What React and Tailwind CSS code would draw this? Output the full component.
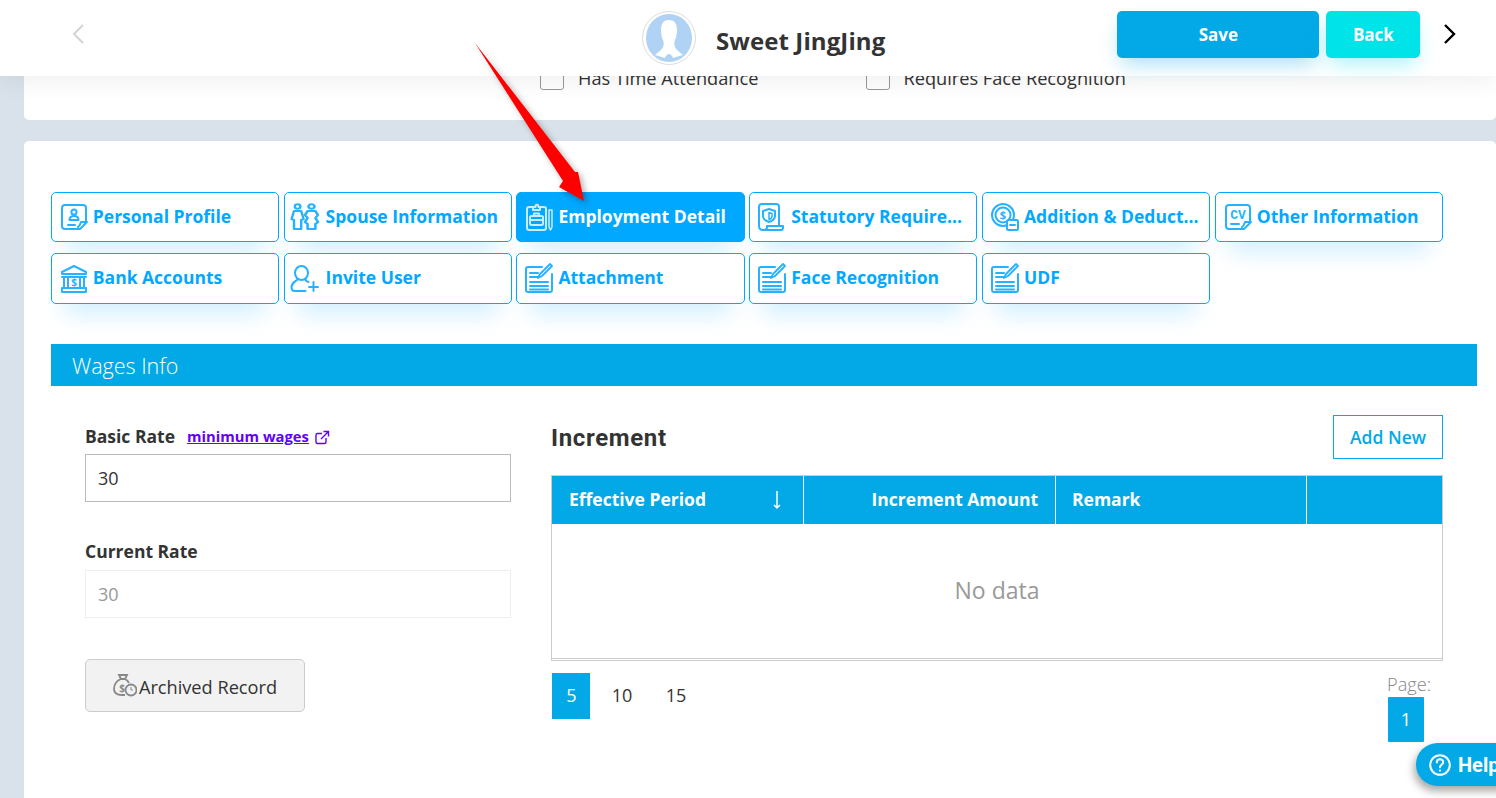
import React from "react";

const Doc = ({ children }) => (
  <svg className="overflow-visible" width="30" height="30" viewBox="0 0 30 30" fill="none" stroke="currentColor" strokeWidth="2" strokeLinecap="round" strokeLinejoin="round">{children}</svg>
);
const icons = {
  profile: (
    <Doc>
      <path d="M6 27c-2 0-3-1-3-3V6c0-2 1-3 3-3h18c2 0 3 1 3 3v14" />
      <path d="M6 27h15l7-7h-6c-1 2-1 4-3 5" />
      <circle cx="15" cy="10" r="2.600" />
      <path d="M10.500 18c0-3 2-4 4.500-4s4.500 1 4.500 4z" />
      <path d="M9 23h7" />
    </Doc>
  ),
  spouse: (
    <Doc>
      <g transform="translate(-4 0) scale(1.2 1)">
        <circle cx="8" cy="4.500" r="2.300" />
        <path d="M5 9h6l2 8-2 1v9H5v-9l-2-1z" />
      </g>
      <g transform="translate(-7.800 0) scale(1.3 1)">
        <circle cx="21" cy="4.500" r="2.300" />
        <path d="M18 9h6l2 4-2 3 2 4-2 2v5h-6v-5l-2-2 2-4-2-3z" />
      </g>
    </Doc>
  ),
  employment: (
    <Doc>
      <path d="M9 5H5C4 5 3 6 3 7v19c0 1 1 2 2 2h15c1 0 2-1 2-2V7c0-1-1-2-2-2h-4" />
      <path d="M9 8V5h2.500c0-3 3-3 3 0H16v3z" />
      <rect x="6" y="14" width="13" height="9" rx="1.500" />
      <path d="M10 14v-2.500h5V14M6 18h13" />
      <path d="M25 8v17l1.500 3 1.500-3V8z" strokeWidth="1.500" />
    </Doc>
  ),
  statutory: (
    <Doc>
      <g transform="translate(-2 0)">
        <path d="M8 28c-3 0-4-2-4-4V5c0-2 1-3 3-3h14c2 0 3 1 3 3v19" />
        <path d="M8 28h18c2 0 2-1 2-2.500V24H12v2c0 1-2 2-4 2z" />
        <path d="M14 7l6 2v5c0 3-3 5-6 6-3-1-6-3-6-6V9z" />
        <path d="M14 10.500l3 1v3c0 1.500-1.500 2.500-3 3z" strokeWidth="1.500" />
      </g>
    </Doc>
  ),
  addition: (
    <Doc>
      <circle cx="13" cy="13" r="11" />
      <circle cx="13" cy="13" r="7.500" />
      <text x="13" y="17" textAnchor="middle" fontSize="11" fontWeight="700" fill="currentColor" stroke="none" fontFamily="Open Sans, sans-serif">$</text>
      <rect x="17" y="18" width="11" height="10" rx="1.500" fill="white" />
      <path d="M20 23h5" />
    </Doc>
  ),
  cv: (
    <Doc>
      <path d="M6 27c-2 0-3-1-3-3V6c0-2 1-3 3-3h18c2 0 3 1 3 3v14" />
      <path d="M6 27h15l7-7h-6c-1 2-1 4-3 5" />
      <text x="15" y="16.500" textAnchor="middle" fontSize="13" fontWeight="700" fill="currentColor" stroke="none" fontFamily="Liberation Mono, monospace">CV</text>
      <path d="M8 22h8" />
    </Doc>
  ),
  bank: (
    <Doc>
      <path d="M15 2L3 8v2h24V8z" />
      <path d="M3 13h24M5 13v11M9 13v11M21 13v11M25 13v11" />
      <path d="M3 24h24v4H3z" />
      <text x="15" y="22" textAnchor="middle" fontSize="10" fontWeight="700" fill="currentColor" stroke="none" fontFamily="Open Sans, sans-serif">$</text>
    </Doc>
  ),
  invite: (
    <Doc>
      <g transform="translate(-2.500 0)">
        <ellipse cx="12" cy="9" rx="6.500" ry="7" />
        <path d="M8 15c0 2-6 3-6 8 0 3 1 4 3 4h11" />
        <path d="M16 15c0 1.500 1 2.500 3 3" />
        <path d="M24 18v9M19.500 23h9" />
      </g>
    </Doc>
  ),
  note: (
    <Doc>
      <path d="M18 3H4C3 3 2 4 2 5v21c0 1 1 2 2 2h22c1 0 2-1 2-2V10" />
      <path d="M6 13h9M6 18h18M6 22h18M6 25.500h18M6 9h8" strokeWidth="2" />
      <path d="M28 2l-10 10-4 2 2-4 10-10z" strokeWidth="1.800" />
    </Doc>
  ),
};

const tabs = [
  ["profile", "Personal Profile"],
  ["spouse", "Spouse Information"],
  ["employment", "Employment Detail", true],
  ["statutory", "Statutory Require..."],
  ["addition", "Addition & Deduct..."],
  ["cv", "Other Information"],
  ["bank", "Bank Accounts"],
  ["invite", "Invite User"],
  ["note", "Attachment"],
  ["note", "Face Recognition"],
  ["note", "UDF"],
];

function Tab({ icon, label, active }) {
  return (
    <div
      className={
        "flex h-full items-center gap-1 rounded-[5px] border border-[#00a8ff] pl-[7px] pr-1 text-[17.5px] leading-none font-bold whitespace-nowrap shadow-[0_22px_24px_-14px_rgba(0,168,255,0.22)] " +
        (active ? "bg-[#00a8ff] text-white" : "bg-white text-[#00a8ff]")
      }
    >
      <span className={"flex h-[30px] w-[30px] shrink-0 items-center justify-center " + (active ? "text-[#c9edff]" : "text-[#26b2ff]")}>
        {icons[icon]}
      </span>
      <span className="pb-[1px]">{label}</span>
    </div>
  );
}

export default function App() {
  return (
    <div className="relative h-[798px] w-[1496px] overflow-hidden bg-[#d9e2ea] font-['Open_Sans',sans-serif] text-[#333]">
      {/* sticky header */}
      <header className="absolute inset-x-0 top-0 z-10 flex h-[76px] items-start bg-white shadow-[0_4px_24px_rgba(0,0,0,0.07)]">
        <svg className="ml-[71px] mt-[23px]" width="14" height="22" viewBox="0 0 14 22" fill="none" stroke="#d4d4d4" strokeWidth="2">
          <path d="M12 2L3 11l9 9" />
        </svg>
        <div className="ml-[557px] mt-[11px] flex h-[54px] w-[54px] items-center justify-center rounded-full border border-[#ddd] bg-white">
          <svg width="48" height="50" viewBox="0 0 48 50">
            <ellipse cx="24" cy="25" rx="23" ry="24" fill="#b0d2f4" />
            <path d="M16 17c0-7 3-10 8-10s8 3 8 10c0 4-1 8-2 10-1 3-1 5 0 7 1 3 5 5 8 8l-10 3c-1-3-3-4-4-4s-3 1-4 4l-10-3c3-3 7-5 8-8 1-2 1-4 0-7-1-2-2-6-2-10z" fill="#fff" />
          </svg>
        </div>
        <div className="ml-5 mt-[23px] text-[24px] leading-[36px] font-bold tracking-[0.1px] text-[#333]">Sweet JingJing</div>
        <div className="ml-[232px] mt-[11px] flex h-[47px] w-[202px] items-center justify-center rounded-[5px] bg-[#02a9e6] text-[17px] font-bold text-white shadow-[0_10px_20px_-4px_rgba(2,169,230,0.35)]">Save</div>
        <div className="ml-[7px] mt-[11px] flex h-[47px] w-[94px] items-center justify-center rounded-[5px] bg-[#00e3e8] text-[17px] font-bold text-white shadow-[0_10px_20px_-4px_rgba(0,227,232,0.35)]">Back</div>
        <svg className="ml-[23px] mt-[23px]" width="14" height="22" viewBox="0 0 14 22" fill="none" stroke="#000" strokeWidth="2.400">
          <path d="M2 2l9 9-9 9" />
        </svg>
      </header>

      {/* first card */}
      <section className="ml-6 flex h-[120px] items-start rounded-b-[5px] bg-white pl-[516px] pt-[68px] text-[18.2px] leading-[20px] text-[#333]">
        <label className="flex items-start gap-[14px]">
          <span className="h-[22px] w-[24px] rounded-[3px] border border-[#999] bg-white" />
          Has Time Attendance
        </label>
        <label className="ml-[108px] flex items-start gap-[13px]">
          <span className="h-[22px] w-[24px] rounded-[3px] border border-[#999] bg-white" />
          Requires Face Recognition
        </label>
      </section>

      {/* second card */}
      <section className="ml-6 mt-[21px] h-[657px] rounded-t-[5px] bg-white pl-[27px] pr-[19px] pt-[51px]">
        <div className="-ml-[0.2px] mr-[34px] grid grid-cols-6 grid-rows-[50px_51px] gap-x-[4.6px] gap-y-[11px]">
          {tabs.map(([icon, label, active]) => (
            <Tab key={label} icon={icon} label={label} active={active} />
          ))}
        </div>

        <div className="mt-[39.5px] flex h-[42px] items-center bg-[#02a9e6] pl-[21px] pt-[3px] text-[21.5px] font-light text-white">Wages Info</div>

        <div className="flex pl-[34px]">
          {/* left */}
          <div className="w-[426px] pt-[38px]">
            <div className="flex h-6 items-center pt-[2px]">
              <span className="text-[17.5px] font-bold text-[#333]">Basic Rate</span>
              <a className="ml-3 flex items-center gap-[5px] text-[14.8px] font-bold text-[#6200ff] underline">
                minimum wages
                <svg width="16" height="16" viewBox="0 0 16 16" fill="none" stroke="#6200ff" strokeWidth="1.400">
                  <path d="M12 9v4c0 1-.500 1.500-1.500 1.500h-7C2.500 14.500 2 14 2 13V6c0-1 .500-1.500 1.500-1.500H8" />
                  <path d="M7 10l7-7M9.500 2.500h5v5" />
                </svg>
              </a>
            </div>
            <div className="mt-1.5 flex h-[48px] items-center border border-[#bbb] pl-3 pt-[2px] text-[18px] text-[#333]">30</div>
            <div className="mt-[37px] flex h-6 items-center pt-[2px] text-[17.5px] font-bold text-[#333]">Current Rate</div>
            <div className="mt-[7px] flex h-[48px] items-center border border-[#eee] pl-3 pt-[2px] text-[18px] text-[#999]">30</div>
            <div className="mt-[41px] flex h-[53px] w-[220px] items-center justify-center gap-[2px] rounded-[5px] border border-[#ccc] bg-[#f2f2f2] text-[18.2px] text-[#333]">
              <svg width="24" height="24" viewBox="0 0 24 24" fill="none" stroke="#888" strokeWidth="1.800">
                <path d="M6 2h8l-2 4H8z" />
                <path d="M8 6C3 8 1 12 1 16c0 4 3 6 8 6h3" />
                <path d="M12 6c2 1 3 2 4 4" />
                <text x="9" y="19" textAnchor="middle" fontSize="10" fontWeight="700" fill="#888" stroke="none" fontFamily="Open Sans, sans-serif">$</text>
                <circle cx="18" cy="17" r="5.500" fill="#f2f2f2" />
                <path d="M18 14v3h2" strokeWidth="1" />
              </svg>
              <span className="pt-[5px]">Archived Record</span>
            </div>
          </div>

          {/* right */}
          <div className="ml-10 w-[892px] pt-[29px]">
            <div className="flex h-[44px] items-center justify-between">
              <h2 className="pt-[2px] font-['Roboto',sans-serif] text-[24px] font-bold tracking-[0.65px] text-[#333]">Increment</h2>
              <div className="flex h-[44px] w-[110px] items-center justify-center border border-[#02a9e6] pt-[2px] text-[17.5px] font-semibold text-[#02a9e6]">Add New</div>
            </div>
            <div className="mt-4 h-[186px] border border-[#ccc]">
              <div className="grid h-[48px] grid-cols-[252px_252px_251px_1fr] bg-[#02a9e6] text-[17.5px] font-bold text-white">
                <div className="flex items-center justify-between border-r border-white pl-[17px] pr-[21px]">
                  Effective Period
                  <svg width="10" height="20" viewBox="0 0 10 20" fill="none" stroke="#fff" strokeWidth="1.500">
                    <path d="M5 1v17M2 15l3 3 3-3" />
                  </svg>
                </div>
                <div className="flex items-center justify-end border-r border-white pr-[17px]">Increment Amount</div>
                <div className="flex items-center border-r border-white pl-4">Remark</div>
                <div />
              </div>
              <div className="flex h-[135px] items-center justify-center border-b border-[#ccc] text-[23px] text-[#999]">No data</div>
            </div>
            <div className="mt-3 flex items-start justify-between pl-px">
              <div className="flex items-center text-[18px] text-[#333]">
                <span className="flex h-[46px] w-[38px] items-center justify-center bg-[#02a9e6] pl-px text-white">5</span>
                <span className="flex h-[46px] w-[64px] items-center justify-center">10</span>
                <span className="flex h-[46px] w-[44px] items-center justify-center">15</span>
              </div>
              <div className="w-[56px]">
                <div className="text-[18.2px] leading-[22px] font-light text-[#888]">Page:</div>
                <div className="ml-px mt-[2px] flex h-[45px] w-[36px] items-center justify-center rounded-[1px] bg-[#02a9e6] text-[18px] text-white">1</div>
              </div>
            </div>
          </div>
        </div>
      </section>

      {/* help bubble */}
      <div className="absolute left-[1416px] top-[743px] z-20 flex h-[43px] w-[110px] items-center gap-[7px] rounded-full bg-[#02a9e6] pl-[13px] font-['Roboto',sans-serif] text-[20px] font-bold text-white shadow-[-2px_5px_8px_rgba(0,0,0,0.35)]">
        <svg width="22" height="22" viewBox="0 0 22 22" fill="none" stroke="#fff" strokeWidth="2">
          <circle cx="11" cy="11" r="9.800" />
          <path d="M7.800 8.500c0-4.200 6.400-4.200 6.400-.300 0 2.600-3.200 2.600-3.200 5" strokeLinecap="round" />
          <circle cx="11" cy="16.500" r="1.100" fill="#fff" stroke="none" />
        </svg>
        Help
      </div>

      {/* annotation arrow */}
      <svg className="absolute left-0 top-0 z-20" width="1496" height="798" style={{ pointerEvents: "none", filter: "drop-shadow(3px 3px 3px rgba(0,0,0,0.3))" }}>
        <polygon points="475,43 575,172 578,172 584,201 559,187 563,181" fill="#ff0000" />
      </svg>
    </div>
  );
}
